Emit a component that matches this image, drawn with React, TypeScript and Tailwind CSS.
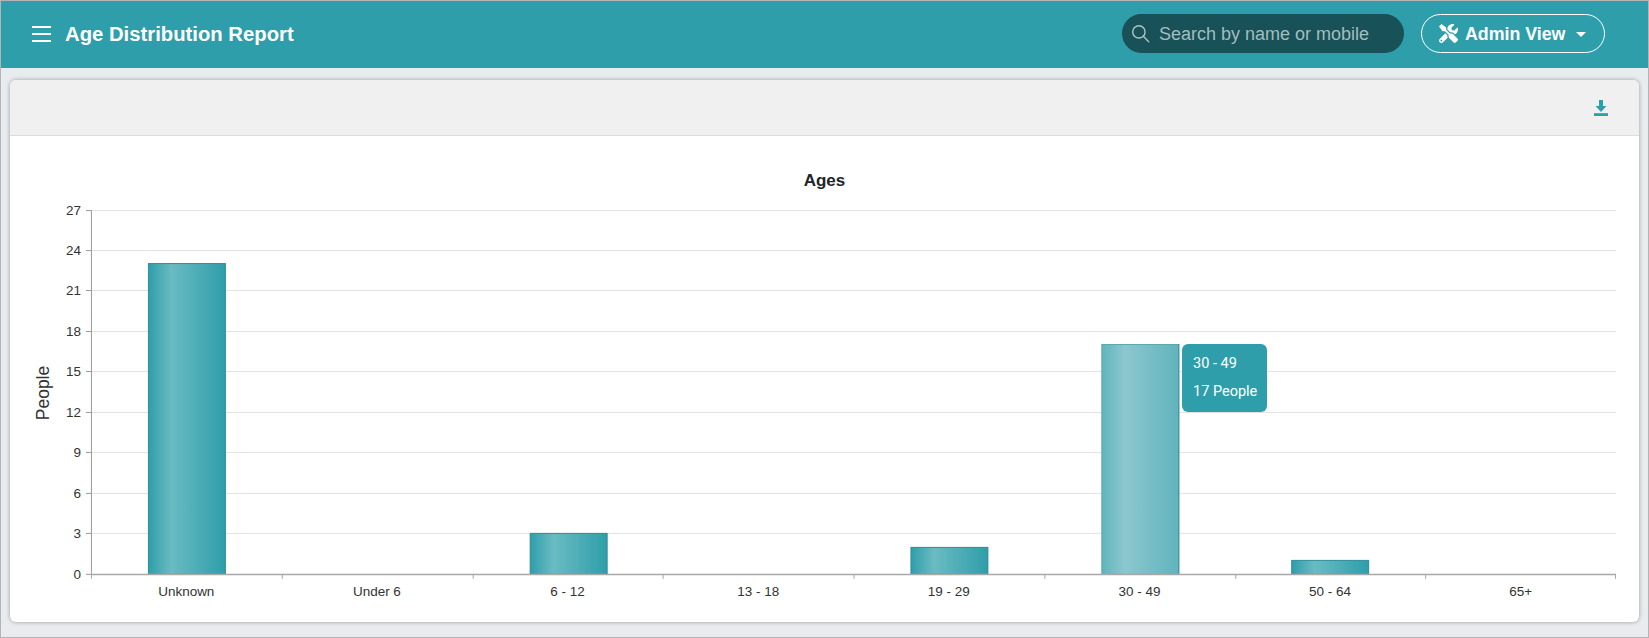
import { FaTools } from "react-icons/fa";

type Bucket = { label: string; people: number; barX?: number };

const buckets: Bucket[] = [
  { label: "Unknown", people: 23, barX: 148 },
  { label: "Under 6", people: 0 },
  { label: "6 - 12", people: 3, barX: 530 },
  { label: "13 - 18", people: 0 },
  { label: "19 - 29", people: 2, barX: 911 },
  { label: "30 - 49", people: 17, barX: 1102 },
  { label: "50 - 64", people: 1, barX: 1292 },
  { label: "65+", people: 0 },
];

const plot = { left: 91, right: 1617, top: 210, bottom: 574 };
const catWidth = (plot.right - plot.left) / buckets.length;
const unit = 13.5;
const ticks = [0, 3, 6, 9, 12, 15, 18, 21, 24, 27];
const sans = "'Liberation Sans', Arial, sans-serif";

function Chart() {
  return (
    <svg viewBox="10 136 1630 486" className="block h-[486px] w-full">
      <defs>
        <linearGradient id="bar" x1="0" x2="1" y1="0" y2="0">
          <stop offset="0" stopColor="#2e9eaa" />
          <stop offset="0.3" stopColor="#6abbc2" />
          <stop offset="1" stopColor="#2e9eaa" />
        </linearGradient>
        <linearGradient id="barHover" x1="0" x2="1" y1="0" y2="0">
          <stop offset="0" stopColor="#61b4bd" />
          <stop offset="0.3" stopColor="#8cc7cf" />
          <stop offset="1" stopColor="#61b3bc" />
        </linearGradient>
      </defs>

      <text x="825" y="185.5" textAnchor="middle" fontFamily={sans} fontSize="17" fontWeight="700" fill="#212529">
        Ages
      </text>

      {ticks.map((t) => {
        const y = Math.max(Math.floor(plot.bottom - t * unit), plot.top) + 0.5;
        return (
          <g key={t}>
            {t > 0 && <line x1={plot.left} x2={plot.right} y1={y} y2={y} stroke="#e2e2e2" />}
            <line x1={plot.left - 5} x2={plot.left} y1={y} y2={y} stroke="#999" />
            <text x={plot.left - 10} y={y + 4.5} textAnchor="end" fontFamily={sans} fontSize="13.5" fill="#333">
              {t}
            </text>
          </g>
        );
      })}

      <text
        transform="translate(49 393) rotate(-90)"
        textAnchor="middle"
        fontFamily={sans}
        fontSize="17.5"
        fill="#333"
      >
        People
      </text>

      {buckets.map((b, i) => {
        const cx = plot.left + catWidth * (i + 0.5);
        const top = Math.floor(plot.bottom - b.people * unit);
        const hovered = b.label === "30 - 49";
        return (
          <g key={b.label}>
            {b.barX !== undefined && (
              <>
                <rect
                  x={b.barX + 0.5}
                  y={top + 0.5}
                  width={77}
                  height={plot.bottom - top}
                  fill={hovered ? "url(#barHover)" : "url(#bar)"}
                  stroke={hovered ? "#5aa9b2" : "#2b8d99"}
                />
                {hovered && (
                  <line x1={b.barX + 77.5} x2={b.barX + 77.5} y1={top} y2={plot.bottom} stroke="#3b8f9a" />
                )}
              </>
            )}
            <text x={cx} y={596} textAnchor="middle" fontFamily={sans} fontSize="13.5" fill="#333">
              {b.label}
            </text>
          </g>
        );
      })}

      <line x1={plot.left + 0.5} x2={plot.left + 0.5} y1={plot.top} y2={plot.bottom} stroke="#999" />
      <line x1={plot.left} x2={plot.right} y1={plot.bottom + 0.5} y2={plot.bottom + 0.5} stroke="#a8a8a8" strokeWidth="1.5" />
      {buckets.map((_, i) => {
        const x = Math.round(plot.left + catWidth * i) + 0.5;
        return <line key={i} x1={x} x2={x} y1={plot.bottom} y2={plot.bottom + 5} stroke="#a8a8a8" />;
      })}
      <line x1={plot.right - 0.5} x2={plot.right - 0.5} y1={plot.bottom} y2={plot.bottom + 5} stroke="#a8a8a8" />
    </svg>
  );
}

export default function App() {
  return (
    <div className="flex h-[638px] w-full flex-col border border-[#b4b4b4] bg-[#e9ecee]">
      <header className="flex h-[67px] shrink-0 items-center bg-[#2e9eaa] pb-[2px] pl-[31px] pr-[43px]">
        <div className="flex h-4 w-[19px] flex-col justify-between">
          <span className="h-0.5 bg-white" />
          <span className="h-0.5 bg-white" />
          <span className="h-0.5 bg-white" />
        </div>
        <h1 className="ml-[14px] mt-[2px] font-['Liberation_Sans',Arial,sans-serif] text-[20.3px] font-bold text-white">
          Age Distribution Report
        </h1>
        <div className="ml-auto flex h-[39px] w-[282px] items-center rounded-full bg-[#185157] pl-[9px]">
          <svg viewBox="0 0 20 20" className="h-[19px] w-[19px]" fill="none" stroke="#a9c4c6" strokeWidth="1.5">
            <circle cx="8.3" cy="8.3" r="6.5" />
            <path d="M13 13l5.6 5.6" strokeLinecap="round" />
          </svg>
          <span className="ml-[9px] mt-[2px] font-['Liberation_Sans',Arial,sans-serif] text-[18px] text-[#a3bdbf]">
            Search by name or mobile
          </span>
        </div>
        <button className="ml-[17px] flex h-[39px] w-[184px] items-center rounded-full border border-white pl-[17px] font-['Liberation_Sans',Arial,sans-serif] text-[17.8px] font-bold text-white">
          <FaTools className="h-[19px] w-[19px]" />
          <span className="ml-[7px] mt-[2px]">Admin View</span>
          <span className="ml-[11px] mt-0.5 h-0 w-0 border-x-[5.5px] border-t-[5.5px] border-x-transparent border-t-white" />
        </button>
      </header>

      <main className="flex-1 px-[9px] pb-[15px] pt-[12px]">
        <section className="relative overflow-hidden rounded-[6px] bg-white shadow-[0_0_4px_rgba(0,0,0,0.35)]">
          <div className="flex h-[56px] items-center justify-end border-b border-[#dcdcdc] bg-[#f0f0f0] pr-[31px]">
            <svg viewBox="0 0 14 16" className="h-4 w-[14px]" fill="#2e9eaa">
              <path d="M5 0h4v6h3.500L7 12 1.500 6H5z" />
              <rect x="0" y="13.200" width="14" height="2.800" />
            </svg>
          </div>
          <Chart />
          <div className="absolute left-[1172px] top-[264px] flex h-[68px] w-[85px] flex-col gap-[8px] whitespace-nowrap rounded-[6px] bg-[#2e9eaa] pl-[11px] pt-[10px] font-['Roboto',sans-serif] text-[14.5px] leading-[20px] text-white">
            <span>30 - 49</span>
            <span>17 People</span>
          </div>
        </section>
      </main>
    </div>
  );
}
